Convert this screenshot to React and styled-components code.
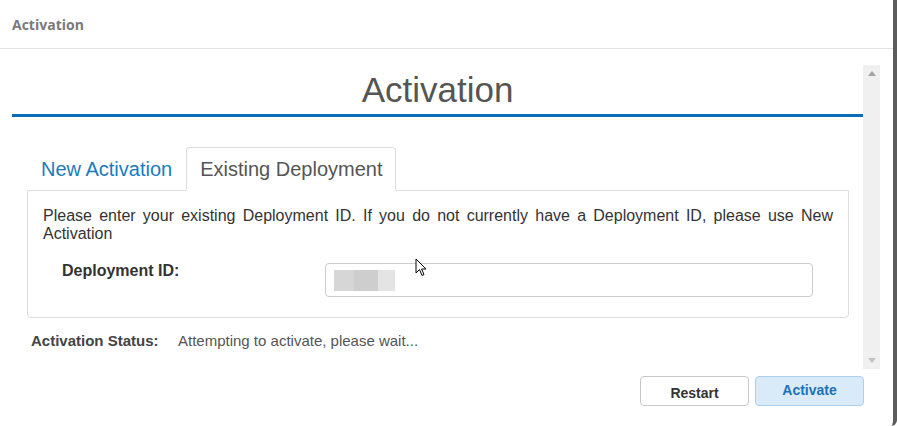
import React from 'react';
import styled, { createGlobalStyle } from 'styled-components';

const GlobalStyle = createGlobalStyle`
  html, body {
    margin: 0;
    padding: 0;
    background: #fff;
  }
  * {
    box-sizing: border-box;
  }
`;

const App = () => {
  return (
    <>
      <GlobalStyle />
      <Dialog>
        <Header>Activation</Header>
        <Body>
          <Content>
            <Title>Activation</Title>
            <Tabs>
              <Tab>New Activation</Tab>
              <Tab active>Existing Deployment</Tab>
            </Tabs>
            <Panel>
              <Intro>
                Please enter your existing Deployment ID. If you do not currently have a Deployment ID, please use New
                Activation
              </Intro>
              <FieldRow>
                <FieldLabel>Deployment ID:</FieldLabel>
                <InputBox>
                  <Blur>
                    <BlurBlock tone="#d6d6d6" w={20} />
                    <BlurBlock tone="#cecece" w={24} />
                    <BlurBlock tone="#e4e4e4" w={17} />
                  </Blur>
                  <Pointer viewBox="0 0 12 19" width="12" height="19">
                    <path
                      d="M1 1 L1 15 L4.5 11.5 L7 17.5 L9 16.6 L6.6 11 L11 11 Z"
                      fill="#fff"
                      stroke="#000"
                      strokeWidth="1"
                      strokeLinejoin="round"
                    />
                  </Pointer>
                </InputBox>
              </FieldRow>
            </Panel>
            <StatusRow>
              <StatusLabel>Activation Status:</StatusLabel>
              <StatusText>Attempting to activate, please wait...</StatusText>
            </StatusRow>
          </Content>
          <Scrollbar>
            <Arrow viewBox="0 0 8 5" width="8" height="5">
              <path d="M0 5 L4 0 L8 5 Z" fill="#a3a3a3" />
            </Arrow>
            <Arrow viewBox="0 0 8 5" width="8" height="5">
              <path d="M0 0 L4 5 L8 0 Z" fill="#c2c2c2" />
            </Arrow>
          </Scrollbar>
        </Body>
        <Footer>
          <Button>Restart</Button>
          <Button primary>Activate</Button>
        </Footer>
      </Dialog>
    </>
  );
};

export default App;

// Styles

const Dialog = styled.div`
  width: 897px;
  height: 426px;
  background: #fff;
  border-right: 4px solid #5c5c5c;
  border-bottom-right-radius: 6px;
  display: flex;
  flex-direction: column;
  font-family: "Liberation Sans", Arial, sans-serif;
`;

const Header = styled.div`
  height: 49px;
  flex: none;
  padding: 0 12px;
  display: flex;
  align-items: center;
  border-bottom: 1px solid #e3e3e3;
  font-family: "Open Sans", sans-serif;
  font-weight: 700;
  font-size: 14px;
  color: #7a7a7a;
`;

const Body = styled.div`
  height: 320px;
  flex: none;
  display: flex;
  padding: 16px 13px 0 12px;
`;

const Content = styled.div`
  flex: 1;
  display: flex;
  flex-direction: column;
`;

const Title = styled.h1`
  margin: 0;
  height: 52px;
  border-bottom: 3px solid #0b6dba;
  text-align: center;
  font-weight: 400;
  font-size: 35px;
  line-height: 50px;
  color: #555;
`;

const Tabs = styled.div`
  display: flex;
  align-items: flex-end;
  margin-top: 30px;
  padding-left: 15px;
`;

const Tab = styled.div`
  height: 44px;
  padding: 0 13px;
  display: flex;
  align-items: center;
  font-size: 20px;
  color: ${(p) => (p.active ? '#555' : '#1a7bc1')};
  border: 1px solid ${(p) => (p.active ? '#ddd' : 'transparent')};
  border-bottom: 1px solid ${(p) => (p.active ? '#fff' : 'transparent')};
  border-radius: 4px 4px 0 0;
  margin-bottom: -1px;
  position: relative;
  z-index: 1;
  background: ${(p) => (p.active ? '#fff' : 'transparent')};
`;

const Panel = styled.div`
  margin: 0 14px 0 15px;
  height: 128px;
  border: 1px solid #ddd;
  border-radius: 0 0 4px 4px;
  padding: 16px 15px 0 15px;
`;

const Intro = styled.p`
  margin: 0;
  font-size: 16px;
  line-height: 18px;
  color: #333;
  text-align: justify;
`;

const FieldRow = styled.div`
  display: flex;
  align-items: flex-start;
  margin-top: 20px;
  padding-left: 19px;
`;

const FieldLabel = styled.div`
  width: 263px;
  font-size: 16px;
  line-height: 16px;
  font-weight: 700;
  color: #333;
`;

const InputBox = styled.div`
  width: 488px;
  height: 34px;
  border: 1px solid #ccc;
  border-radius: 4px;
  padding: 6px 8px;
  position: relative;
`;

const Blur = styled.div`
  display: flex;
  height: 21px;
`;

const BlurBlock = styled.div`
  width: ${(p) => p.w}px;
  background: ${(p) => p.tone};
`;

const Pointer = styled.svg`
  position: absolute;
  left: 89px;
  top: -6px;
`;

const StatusRow = styled.div`
  display: flex;
  align-items: center;
  margin-top: 14px;
  padding-left: 19px;
  font-size: 15px;
`;

const StatusLabel = styled.div`
  width: 147px;
  font-weight: 700;
  color: #444;
`;

const StatusText = styled.div`
  color: #555;
`;

const Scrollbar = styled.div`
  width: 17px;
  flex: none;
  background: #f0f0f0;
  display: flex;
  flex-direction: column;
  justify-content: space-between;
  align-items: center;
  padding: 6px 0 6px;
`;

const Arrow = styled.svg`
  display: block;
`;

const Footer = styled.div`
  flex: 1;
  display: flex;
  justify-content: flex-end;
  align-items: flex-start;
  gap: 6px;
  padding: 7px 29px 0 0;
`;

const Button = styled.button`
  width: 109px;
  height: 30px;
  border-radius: 4px;
  font-family: "Liberation Sans", Arial, sans-serif;
  font-size: 14px;
  font-weight: 700;
  border: 1px solid ${(p) => (p.primary ? '#a9d0ee' : '#c8c8c8')};
  background: ${(p) => (p.primary ? '#d9eaf8' : '#fff')};
  color: ${(p) => (p.primary ? '#1a73b8' : '#333')};
  padding: ${(p) => (p.primary ? '0 0 3px' : '3px 0 0')};
`;
